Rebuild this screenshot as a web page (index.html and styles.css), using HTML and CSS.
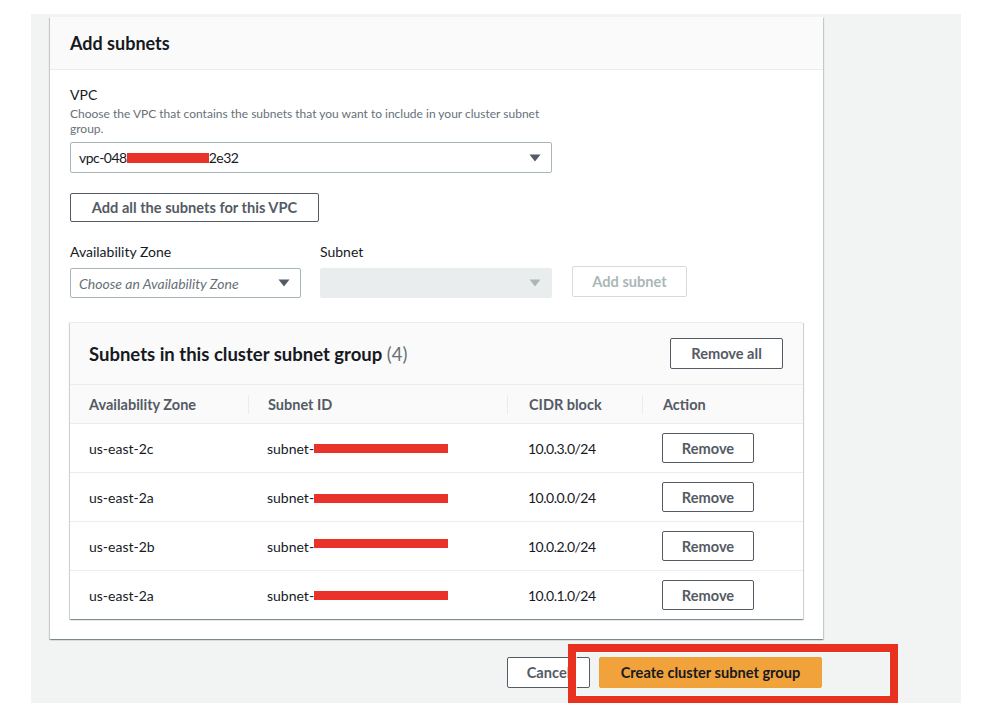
FILE: index.html
```html
<!DOCTYPE html>
<html>
<head>
<meta charset="utf-8">
<link rel="stylesheet" href="styles.css">
</head>
<body>
<div class="page">
  <section class="card">
    <header class="card-header"><h2 class="card-title">Add subnets</h2></header>
    <div class="card-body">
      <div class="label">VPC</div>
      <p class="desc">Choose the VPC that contains the subnets that you want to include in your cluster subnet group.</p>
      <div class="select select-vpc">
        <span class="select-value num">vpc-048<span class="redact redact-vpc"></span>2e32</span>
        <svg class="caret" width="12" height="8" viewBox="0 0 12 8"><path d="M0.5 0.5 H11.5 L6 7.5 Z" fill="#545b64"/></svg>
      </div>
      <button class="btn btn-add-all">Add all the subnets for this VPC</button>
      <div class="az-row">
        <div class="az-field">
          <div class="label">Availability Zone</div>
          <div class="select select-az">
            <span class="placeholder">Choose an Availability Zone</span>
            <svg class="caret" width="12" height="8" viewBox="0 0 12 8"><path d="M0.5 0.5 H11.5 L6 7.5 Z" fill="#545b64"/></svg>
          </div>
        </div>
        <div class="subnet-field">
          <div class="label">Subnet</div>
          <div class="select select-disabled">
            <span class="select-value"></span>
            <svg class="caret" width="12" height="8" viewBox="0 0 12 8"><path d="M0.5 0.5 H11.5 L6 7.5 Z" fill="#aab7b8"/></svg>
          </div>
        </div>
        <button class="btn btn-disabled">Add subnet</button>
      </div>
      <div class="table-box">
        <div class="table-head">
          <h3 class="table-title">Subnets in this cluster subnet group <span class="count">(4)</span></h3>
          <button class="btn btn-remove-all">Remove all</button>
        </div>
        <div class="grid-row thead">
          <div class="th c1">Availability Zone</div>
          <div class="th c2">Subnet ID</div>
          <div class="th c3">CIDR block</div>
          <div class="th c4">Action</div>
        </div>
        <div class="grid-row trow">
          <div class="td c1">us-east-2c</div>
          <div class="td c2">subnet-<span class="redact redact-id"></span></div>
          <div class="td c3 num">10.0.3.0/24</div>
          <div class="td c4"><button class="btn btn-remove">Remove</button></div>
        </div>
        <div class="grid-row trow">
          <div class="td c1">us-east-2a</div>
          <div class="td c2">subnet-<span class="redact redact-id redact-low"></span></div>
          <div class="td c3 num">10.0.0.0/24</div>
          <div class="td c4"><button class="btn btn-remove">Remove</button></div>
        </div>
        <div class="grid-row trow">
          <div class="td c1">us-east-2b</div>
          <div class="td c2">subnet-<span class="redact redact-id redact-high"></span></div>
          <div class="td c3 num">10.0.2.0/24</div>
          <div class="td c4"><button class="btn btn-remove">Remove</button></div>
        </div>
        <div class="grid-row trow">
          <div class="td c1">us-east-2a</div>
          <div class="td c2">subnet-<span class="redact redact-id"></span></div>
          <div class="td c3 num">10.0.1.0/24</div>
          <div class="td c4"><button class="btn btn-remove">Remove</button></div>
        </div>
      </div>
    </div>
  </section>
  <div class="actions">
    <button class="btn btn-cancel">Cancel</button>
    <button class="btn btn-primary">Create cluster subnet group</button>
  </div>
  <div class="annotation"></div>
</div>
</body>
</html>
```
FILE: styles.css
```css
* { box-sizing: border-box; }
html, body { margin: 0; padding: 0; background: #ffffff; }
body { font-family: Lato, "Open Sans", sans-serif; color: #16191f; }

.page {
  position: relative;
  margin: 14px 0 0 31px;
  width: 930px;
  height: 689px;
  padding: 3px 0 0 19px;
  background: #f2f3f3;
}

.card {
  width: 773px;
  background: #ffffff;
  box-shadow: 0 1px 1px 0 rgba(0, 28, 36, 0.3), 1px 1px 1px 0 rgba(0, 28, 36, 0.15), -1px 1px 1px 0 rgba(0, 28, 36, 0.15);
}
.card-header {
  height: 53px;
  padding: 0 20px;
  display: flex;
  align-items: center;
  background: #fafafa;
  border-bottom: 1px solid #eaeded;
}
.card-title { margin: 0; font-size: 18px; font-weight: 700; color: #16191f; }

.card-body { padding: 15px 20px 20px 20px; }

.label { font-size: 14px; line-height: 20px; color: #16191f; }
.desc {
  margin: 1px 0 0 0;
  width: 482px;
  font-size: 12px;
  line-height: 15px;
  color: #687078;
}

.num { letter-spacing: -0.5px; }

.select {
  display: flex;
  align-items: center;
  justify-content: space-between;
  border: 1px solid #aab7b8;
  border-radius: 2px;
  background: #ffffff;
  padding: 0 10px 0 8px;
}
.select-vpc { margin-top: 6px; width: 482px; height: 31px; }
.select-value { font-size: 14px; color: #16191f; display: flex; align-items: center; }
.caret { display: block; }

.redact { display: inline-block; background: #e8322a; letter-spacing: 0; }
.redact-vpc { width: 82px; height: 10px; }
.redact-id { width: 134px; height: 9px; }
.redact-low { position: relative; top: 1px; }
.redact-high { position: relative; top: -3px; }

.btn {
  font-family: Lato, "Open Sans", sans-serif;
  font-size: 14.6px;
  font-weight: 700;
  color: #545b64;
  background: #ffffff;
  border: 1px solid #545b64;
  border-radius: 2px;
  padding: 0;
  display: flex;
  align-items: center;
  justify-content: center;
}
.btn-add-all { margin-top: 20px; width: 249px; height: 29px; }

.az-row { margin-top: 20px; display: flex; align-items: flex-end; }
.az-field { width: 231px; }
.subnet-field { width: 232px; margin-left: 19px; }
.select-az, .select-disabled { margin-top: 6px; height: 30px; }
.placeholder { font-size: 14px; font-style: italic; color: #687078; }
.select-disabled { background: #eaeded; border-color: #eaeded; }
.btn-disabled {
  margin-left: 20px;
  margin-bottom: 1px;
  width: 115px;
  height: 31px;
  border-color: #d5dbdb;
  color: #aab7b8;
}

.table-box {
  margin-top: 24px;
  background: #ffffff;
  box-shadow: 0 1px 1px 0 rgba(0, 28, 36, 0.3), 1px 1px 1px 0 rgba(0, 28, 36, 0.15), -1px 1px 1px 0 rgba(0, 28, 36, 0.15);
  border-top: 1px solid #eaeded;
}
.table-head {
  height: 61px;
  padding: 0 20px 0 19px;
  display: flex;
  align-items: center;
  justify-content: space-between;
  background: #fafafa;
}
.table-title { margin: 0; font-size: 18.5px; font-weight: 700; color: #16191f; }
.count { font-weight: 400; color: #687078; }
.btn-remove-all { width: 113px; height: 31px; }

.grid-row {
  display: grid;
  grid-template-columns: 178px 259px 135px 161px;
  border-top: 1px solid #eaeded;
}
.thead { background: #fafafa; padding: 10px 0 9px 0; }
.th {
  font-size: 14.5px;
  font-weight: 700;
  line-height: 19px;
  height: 19px;
  color: #545b64;
}
.thead .c2, .thead .c3, .thead .c4 { border-left: 1px solid #eaeded; }
.c1 { padding-left: 19px; }
.c2 { padding-left: 19px; }
.c3 { padding-left: 21px; }
.c4 { padding-left: 20px; }
.trow { height: 49px; align-items: center; }
.td { font-size: 14px; color: #16191f; display: flex; align-items: center; }
.btn-remove { width: 92px; height: 30px; }

.actions {
  width: 773px;
  margin-top: 18px;
  padding-right: 1px;
  display: flex;
  justify-content: flex-end;
  gap: 9px;
}
.btn-cancel { width: 83px; height: 31px; }
.btn-primary {
  width: 223px;
  height: 31px;
  background: #f2a23b;
  border-color: #eea03a;
  color: #16191f;
}

.annotation {
  position: absolute;
  left: 537px;
  top: 630px;
  width: 330px;
  height: 59px;
  border: 8px solid #e8321f;
  border-bottom-width: 7px;
  box-shadow: inset 0 0 0 1px rgba(255, 255, 255, 0.8);
}
```
